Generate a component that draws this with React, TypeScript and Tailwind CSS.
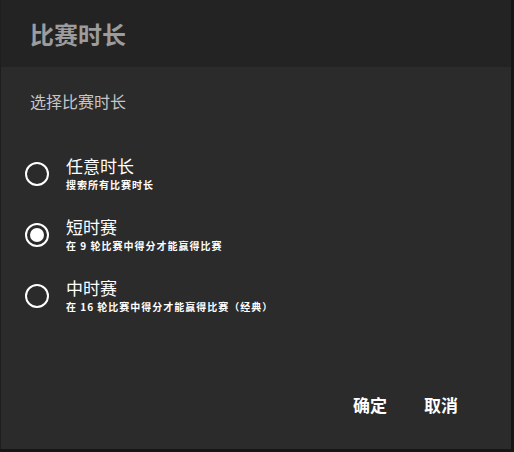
const options = [
  { label: '任意时长', desc: '搜索所有比赛时长', selected: false },
  { label: '短时赛', desc: '在 9 轮比赛中得分才能赢得比赛', selected: true },
  { label: '中时赛', desc: '在 16 轮比赛中得分才能赢得比赛（经典）', selected: false },
];

function Radio({ selected }: { selected: boolean }) {
  return (
    <div className="w-[24px] h-[24px] rounded-full border-[2.5px] border-white flex items-center justify-center shrink-0">
      {selected && <div className="w-[14px] h-[14px] rounded-full bg-white" />}
    </div>
  );
}

export default function App() {
  return (
    <div
      className="w-[514px] h-[452px] bg-[#161616] overflow-hidden"
      style={{ fontFamily: '"Noto Sans CJK SC", "Noto Sans", sans-serif' }}
    >
      <div className="w-[511px] h-[449px] flex flex-col bg-[#2b2b2b] border-l border-[#1e1e1e]">
        {/* Header */}
        <div className="h-[67px] bg-[#232323] flex items-center px-[29px]">
          <h1 className="text-[24px] font-bold text-[#9c9c9c] leading-none">比赛时长</h1>
        </div>

        <div className="flex-1 flex flex-col">
          <p className="mt-[26px] px-[29px] text-[16px] text-[#c6c6c6] leading-none">选择比赛时长</p>

          <div className="mt-[47px] flex flex-col gap-[25px]">
            {options.map((o) => (
              <div key={o.label} className="flex items-center pl-[24px]">
                <Radio selected={o.selected} />
                <div className="ml-[17px] flex flex-col">
                  <span className="text-[17px] text-white leading-[20px]">{o.label}</span>
                  <span className="mt-[2px] text-[10px] font-bold text-white leading-[14px] tracking-[1px]">{o.desc}</span>
                </div>
              </div>
            ))}
          </div>

          <div className="mt-auto mb-[36px] flex justify-end gap-[37px] pr-[53px]">
            <button className="text-[17px] font-bold text-white leading-none">确定</button>
            <button className="text-[17px] font-bold text-white leading-none">取消</button>
          </div>
        </div>
      </div>
    </div>
  );
}
